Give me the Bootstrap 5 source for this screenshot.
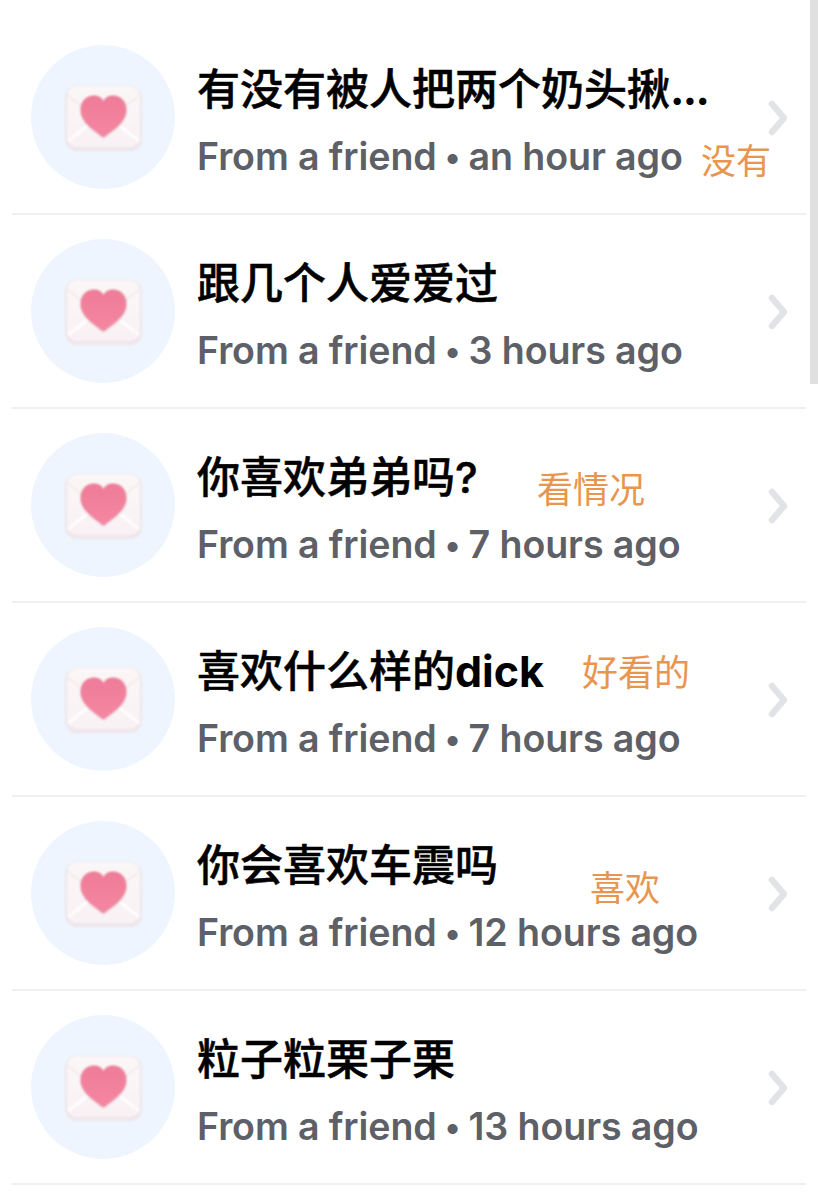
<!DOCTYPE html>
<html lang="zh">

<head>
  <meta charset="UTF-8" />
  <meta name="viewport" content="width=device-width, initial-scale=1.0" />
  <title>Inbox</title>
  <link href="https://cdn.jsdelivr.net/npm/bootstrap@5.3.3/dist/css/bootstrap.min.css" rel="stylesheet" />
  <style>
    html, body { height: 1200px; overflow: hidden; background: #fff; }
    .inbox-list { padding: 21px 12px 0 12px; width: 818px; }
    .inbox-row { height: 194px; border-bottom: 2px solid #efefef; padding: 24px 0 0 19px; position: relative; }
    .avatar-round { width: 144px; height: 144px; background: #eef5fe; border-radius: 50%; flex: none; }
    .msg-text { margin-left: 22px; min-width: 0; }
    .msg-title { font-family: Inter, "Noto Sans CJK SC", sans-serif; font-size: 43px; font-weight: 500; line-height: 52px; color: #000; margin-top: 18px; white-space: nowrap; -webkit-text-stroke: 0.5px #000; }
    .msg-title b { font-weight: 700; -webkit-text-stroke: 0; }
    .title-dots { letter-spacing: -1.600px; }
    .msg-meta { font-family: Inter, "Noto Sans", sans-serif; font-size: 37.600px; font-weight: 570; line-height: 46px; color: #5d6066; margin-top: 19px; white-space: nowrap; letter-spacing: -0.1px; }
    .meta-dot { font-size: 32px; position: relative; top: -2px; }
    .row-chevron { position: absolute; left: 755px; top: 73px; }
    .hand-note { position: absolute; font-family: "Noto Sans CJK SC", sans-serif; font-size: 35px; line-height: 42px; color: #e8954f; white-space: nowrap; }
    .note-a { left: 689px; top: 117px; }
    .note-b { left: 525px; top: 57px; font-size: 36px; }
    .note-c { left: 570px; top: 46px; font-size: 36px; }
    .note-d { left: 578px; top: 68px; }
    .scroll-thumb { position: fixed; top: 0; right: 0; width: 8px; height: 384px; background: #e0e0e0; }
  </style>
</head>

<body>
  <svg width="0" height="0" class="position-absolute">
    <defs>
      <linearGradient id="envFill" x1="0" y1="0" x2="0" y2="1">
        <stop offset="0" stop-color="#fbf6f7" />
        <stop offset="1" stop-color="#f9f2f5" />
      </linearGradient>
      <linearGradient id="heartFill" x1="0" y1="0" x2="0" y2="1">
        <stop offset="0" stop-color="#ef7c98" />
        <stop offset="1" stop-color="#f586a1" />
      </linearGradient>
      <filter id="softBlur" x="-10%" y="-10%" width="120%" height="120%"><feGaussianBlur stdDeviation="0.9" /></filter>
      <filter id="softerBlur" x="-10%" y="-10%" width="120%" height="120%"><feGaussianBlur stdDeviation="1.600" /></filter>
      <symbol id="loveMail" viewBox="0 0 144 144">
        <rect x="34" y="41" width="77" height="65" rx="12" fill="#eee6ea" filter="url(#softBlur)" />
        <rect x="36" y="41" width="73" height="61" rx="10" fill="url(#envFill)" filter="url(#softBlur)" />
        <path d="M36 50 L72 78 L109 50" fill="none" stroke="#e9dfe4" stroke-width="1" filter="url(#softBlur)" />
        <path d="M37 96 L60 78 M108 96 L85 78" fill="none" stroke="#ffffff" stroke-width="2.500" filter="url(#softBlur)" />
        <path d="M72.500 93 C66 87 50 79 50 65 C50 56 56 51 63 51 C67 51 71 53 72.500 57 C74 53 78 51 82 51 C89 51 95 56 95 65 C95 79 79 87 72.500 93 Z" fill="#e3a3b3" filter="url(#softerBlur)" />
        <path d="M72.500 92 C66 86 50 78 50 65 C50 56 56 51 63 51 C67 51 71 53 72.500 57 C74 53 78 51 82 51 C89 51 95 56 95 65 C95 78 79 86 72.500 92 Z" fill="url(#heartFill)" filter="url(#softBlur)" />
      </symbol>
      <symbol id="chevronRight" viewBox="0 0 32 48">
        <path d="M5 10 L17 24 L5 38" fill="none" stroke="#e1e3e6" stroke-width="6.500" stroke-linecap="round" stroke-linejoin="round" />
      </symbol>
    </defs>
  </svg>

  <div class="inbox-list">
    <div class="inbox-row d-flex">
      <div class="avatar-round"><svg width="144" height="144"><use href="#loveMail" /></svg></div>
      <div class="msg-text">
        <div class="msg-title">有没有被人把两个奶头揪<b class="title-dots">...</b></div>
        <div class="msg-meta">From a friend<span class="meta-dot"> • </span>an hour ago</div>
      </div>
      <svg class="row-chevron" width="32" height="48"><use href="#chevronRight" /></svg>
      <span class="hand-note note-a">没有</span>
    </div>
    <div class="inbox-row d-flex">
      <div class="avatar-round"><svg width="144" height="144"><use href="#loveMail" /></svg></div>
      <div class="msg-text">
        <div class="msg-title">跟几个人爱爱过</div>
        <div class="msg-meta">From a friend<span class="meta-dot"> • </span>3 hours ago</div>
      </div>
      <svg class="row-chevron" width="32" height="48"><use href="#chevronRight" /></svg>
    </div>
    <div class="inbox-row d-flex">
      <div class="avatar-round"><svg width="144" height="144"><use href="#loveMail" /></svg></div>
      <div class="msg-text">
        <div class="msg-title">你喜欢弟弟吗?</div>
        <div class="msg-meta">From a friend<span class="meta-dot"> • </span>7 hours ago</div>
      </div>
      <svg class="row-chevron" width="32" height="48"><use href="#chevronRight" /></svg>
      <span class="hand-note note-b">看情况</span>
    </div>
    <div class="inbox-row d-flex">
      <div class="avatar-round"><svg width="144" height="144"><use href="#loveMail" /></svg></div>
      <div class="msg-text">
        <div class="msg-title">喜欢什么样的<b>dick</b></div>
        <div class="msg-meta">From a friend<span class="meta-dot"> • </span>7 hours ago</div>
      </div>
      <svg class="row-chevron" width="32" height="48"><use href="#chevronRight" /></svg>
      <span class="hand-note note-c">好看的</span>
    </div>
    <div class="inbox-row d-flex">
      <div class="avatar-round"><svg width="144" height="144"><use href="#loveMail" /></svg></div>
      <div class="msg-text">
        <div class="msg-title">你会喜欢车震吗</div>
        <div class="msg-meta">From a friend<span class="meta-dot"> • </span>12 hours ago</div>
      </div>
      <svg class="row-chevron" width="32" height="48"><use href="#chevronRight" /></svg>
      <span class="hand-note note-d">喜欢</span>
    </div>
    <div class="inbox-row d-flex">
      <div class="avatar-round"><svg width="144" height="144"><use href="#loveMail" /></svg></div>
      <div class="msg-text">
        <div class="msg-title">粒子粒栗子栗</div>
        <div class="msg-meta">From a friend<span class="meta-dot"> • </span>13 hours ago</div>
      </div>
      <svg class="row-chevron" width="32" height="48"><use href="#chevronRight" /></svg>
    </div>
  </div>
  <div class="scroll-thumb"></div>
  <script src="https://cdn.jsdelivr.net/npm/bootstrap@5.3.3/dist/js/bootstrap.bundle.min.js"></script>
</body>

</html>
